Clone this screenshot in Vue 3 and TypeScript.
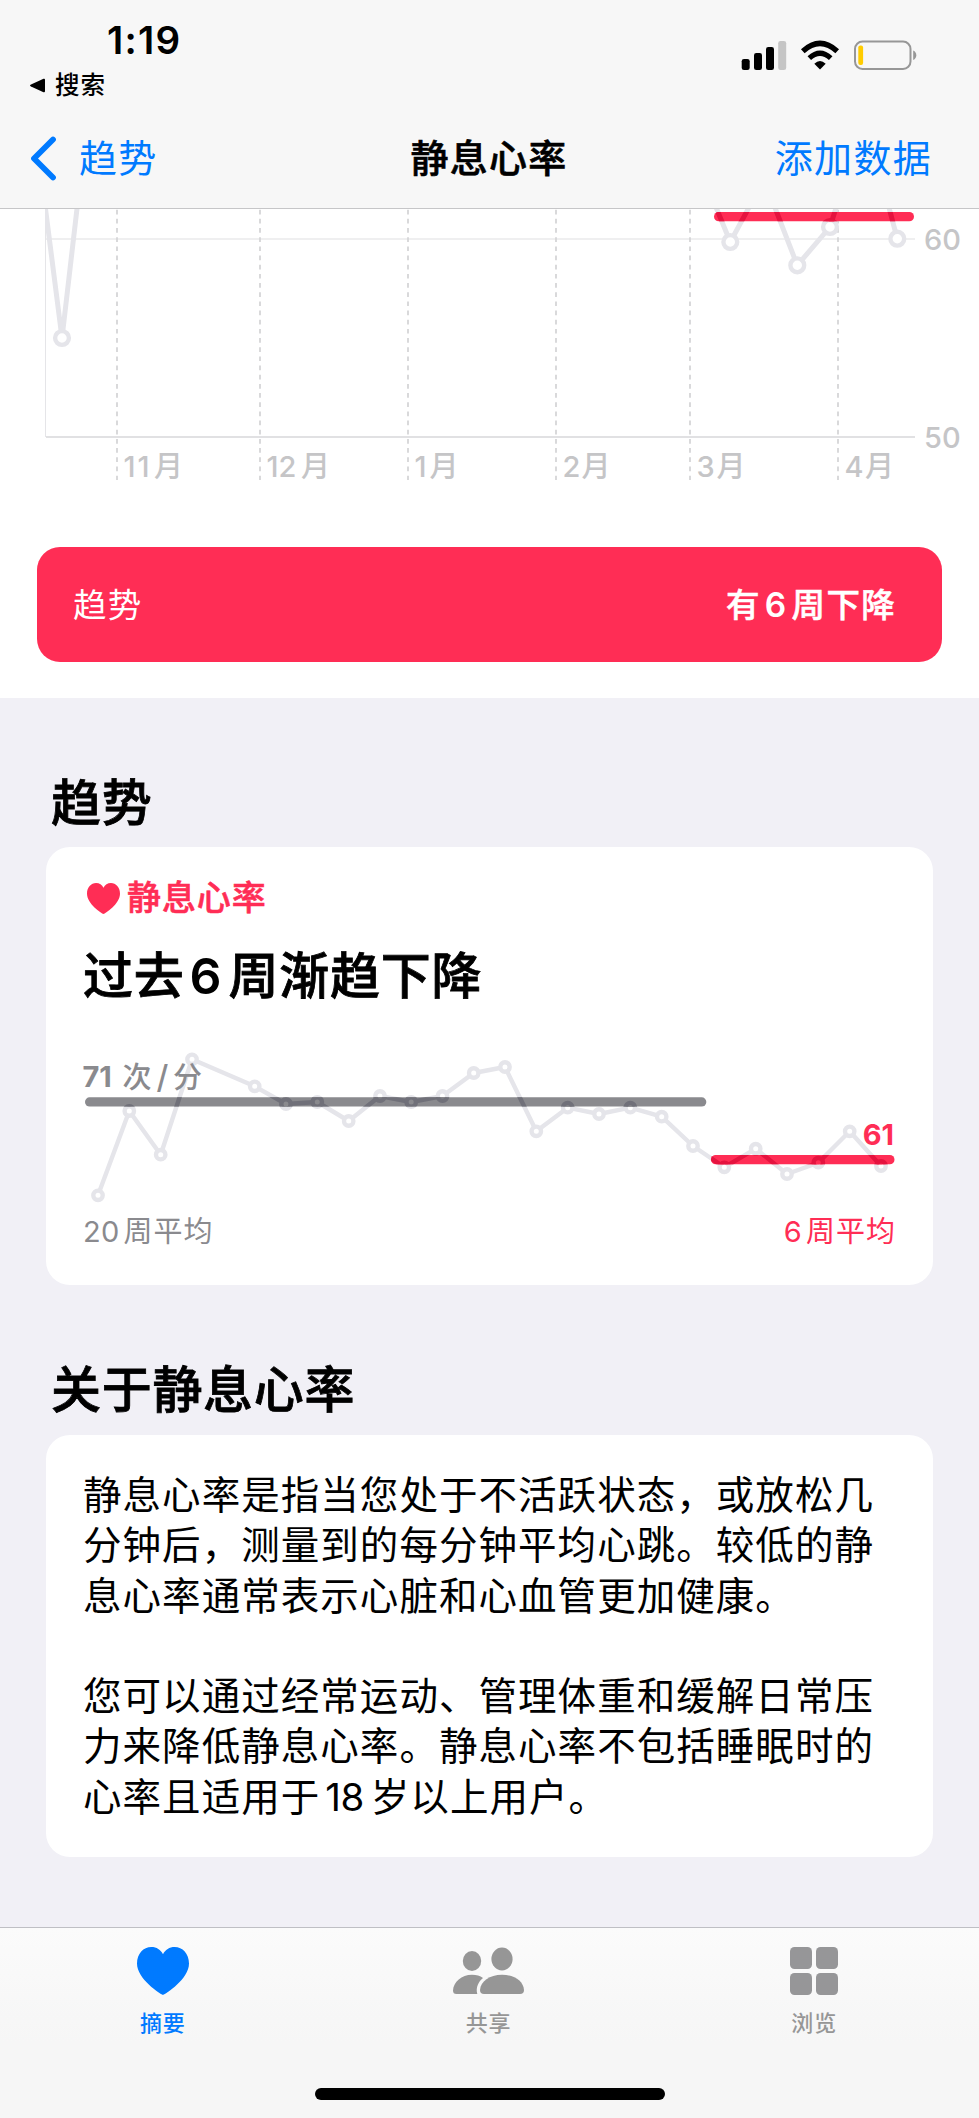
<script setup lang="ts">
interface Point { x: number; y: number }
interface Month { x: number; num: string; label: number }

const months: Month[] = [
  { x: 117, num: '11', label: 157.5 },
  { x: 260, num: '12', label: 304.5 },
  { x: 408, num: '1', label: 433 },
  { x: 556, num: '2', label: 585 },
  { x: 690, num: '3', label: 720 },
  { x: 838, num: '4', label: 868.5 },
]

const historyLine = 'M45 205L62 338L78 200M713 200L730.3 242L753 200M772 200L797.3 265.3L830 227L838.5 200M887 200L897.3 239'
const historyDots: Point[] = [
  { x: 62, y: 338 }, { x: 730.3, y: 242 }, { x: 797.3, y: 265.3 }, { x: 830, y: 227 }, { x: 897.3, y: 238.7 },
]

const trend: Point[] = [
  [98, 1195.3], [129.3, 1111], [160.7, 1154.7], [192, 1059.3], [254.7, 1086.3], [286, 1104], [317.3, 1102],
  [348.7, 1121], [380, 1096], [411.2, 1102], [442.5, 1096], [473.7, 1073], [505, 1067], [536.3, 1131.3],
  [567.7, 1107.7], [599, 1114], [630.3, 1107.7], [661.7, 1116.7], [693, 1146], [724.3, 1167.3],
  [755.7, 1148.7], [787, 1174], [818.3, 1162.7], [849.7, 1131.3], [881, 1166],
].map(([x, y]) => ({ x, y }))
const trendLine = 'M' + trend.map(p => `${p.x} ${p.y}`).join('L')

const heart = 'M26 48C23 46.800 0 32 0 16.500C0 6.500 6.500 0 14.300 0C19.600 0 23.700 2.700 26 7.200C28.300 2.700 32.400 0 37.700 0C45.500 0 52 6.500 52 16.500C52 32 29 46.800 26 48Z'

const about: string[][] = [
  ['静息心率是指当您处于不活跃状态，或放松几', '分钟后，测量到的每分钟平均心跳。较低的静', '息心率通常表示心脏和心血管更加健康。'],
  ['您可以通过经常运动、管理体重和缓解日常压', '力来降低静息心率。静息心率不包括睡眠时的'],
]
</script>

<template>
  <div class="screen">
    <header class="top">
      <div class="status">
        <div class="status-left">
          <div class="time">1:19</div>
          <div class="return">
            <svg width="17" height="17" viewBox="0 0 17 17"><path d="M2 7.500L14.500 1.800Q16 1.300 16 2.800V14.200Q16 15.700 14.500 15.200L2 9.500Q0 8.500 2 7.500Z" /></svg>
            <span>搜索</span>
          </div>
        </div>
        <svg class="status-icons" width="176" height="32" viewBox="741 39 176 32">
          <rect x="741.700" y="59" width="8" height="11" rx="2.300" />
          <rect x="754" y="53" width="8" height="17" rx="2.300" />
          <rect x="766" y="47" width="8" height="23" rx="2.300" />
          <rect x="778.200" y="41" width="8" height="29" rx="2.300" fill="#c5c5c5" />
          <g fill="none" stroke="#000">
            <path d="M802.800 51.200Q820 35.600 837.200 51.200" stroke-width="5.400" />
            <path d="M809.300 58.100Q820 48.300 830.700 58.100" stroke-width="5.200" />
          </g>
          <path d="M820 69.500L814.300 63.800Q820 58 825.700 63.800Z" />
          <rect x="855" y="41.500" width="55.500" height="27.500" rx="7.500" fill="none" stroke="#979797" stroke-width="2" />
          <path d="M913.200 50.500Q916.300 52 916.300 55.200Q916.300 58.400 913.200 60Z" fill="#979797" />
          <rect x="858.300" y="45.500" width="4.800" height="19.500" rx="2" fill="#ffcc00" />
        </svg>
      </div>
      <nav class="nav">
        <div class="back">
          <svg width="27" height="45" viewBox="0 0 27 45"><path d="M23 3.500L4 22.500L23 41.500" fill="none" stroke="#007aff" stroke-width="5.800" stroke-linecap="round" stroke-linejoin="round" /></svg>
          <span>趋势</span>
        </div>
        <div class="nav-title">静息心率</div>
        <div class="nav-action">添加数据</div>
      </nav>
    </header>

    <section class="history">
      <svg class="history-chart" width="979" height="338" viewBox="0 209 979 338">
        <defs>
          <clipPath id="plot"><rect x="45" y="209" width="870" height="229" /></clipPath>
          <clipPath id="hbar"><rect x="714" y="212" width="200" height="9.300" rx="4.650" /></clipPath>
        </defs>
        <path d="M45 239H915" stroke="#efeff0" stroke-width="2" />
        <path d="M45.500 209V437" stroke="#e5e5e8" stroke-width="1" />
        <path d="M46 437H915" stroke="#e1e1e3" stroke-width="2" />
        <path v-for="m in months" :key="m.x" :d="`M${m.x} 209.700V480`" stroke="#d5d5d7" stroke-width="1.800" stroke-dasharray="4.700 4.470" />
        <g clip-path="url(#plot)" class="series wide">
          <path :d="historyLine" />
          <circle v-for="p in historyDots" :key="p.x" :cx="p.x" :cy="p.y" r="6.900" fill="#fff" />
        </g>
        <rect x="714" y="212" width="200" height="9.300" rx="4.650" fill="#ff2d55" />
        <g clip-path="url(#hbar)" class="series wide on-red">
          <path :d="historyLine" />
          <circle v-for="p in historyDots" :key="p.x" :cx="p.x" :cy="p.y" r="6.900" fill="#ff2d55" />
        </g>
        <g class="axis">
          <g v-for="m in months" :key="m.x">
            <text :x="m.x + 6.500" y="476.500" :class="{ ones: m.num === '11' }">{{ m.num }}</text>
            <text :x="m.label - 3.500" y="477">月</text>
          </g>
          <text x="924" y="249.500">60</text>
          <text x="924" y="447.500">50</text>
        </g>
      </svg>
      <div class="banner">
        <span>趋势</span>
        <strong>有<i>6</i>周下降</strong>
      </div>
    </section>

    <main class="content">
      <h2>趋势</h2>
      <article class="card trend-card">
        <div class="metric">
          <svg width="33" height="31" viewBox="0 0 52 48" preserveAspectRatio="none"><path :d="heart" fill="#ff2d55" /></svg>
          <span>静息心率</span>
        </div>
        <h3>过去<i>6</i>周渐趋下降</h3>
        <svg class="trend-chart" width="887" height="205" viewBox="46 1005 887 205">
          <defs>
            <clipPath id="gbar"><rect x="85" y="1097.300" width="621.300" height="9.300" rx="4.650" /></clipPath>
            <clipPath id="rbar"><rect x="711" y="1155" width="183.500" height="9.300" rx="4.650" /></clipPath>
          </defs>
          <g class="series">
            <path :d="trendLine" />
            <circle v-for="p in trend" :key="p.x" :cx="p.x" :cy="p.y" r="4.700" fill="#fff" />
          </g>
          <rect x="85" y="1097.300" width="621.300" height="9.300" rx="4.650" fill="#8a8a8e" />
          <g clip-path="url(#gbar)" class="series on-gray">
            <path :d="trendLine" />
            <circle v-for="p in trend" :key="p.x" :cx="p.x" :cy="p.y" r="4.700" fill="#8a8a8e" />
          </g>
          <rect x="711" y="1155" width="183.500" height="9.300" rx="4.650" fill="#ff2d55" />
          <g clip-path="url(#rbar)" class="series on-red">
            <path :d="trendLine" />
            <circle v-for="p in trend" :key="p.x" :cx="p.x" :cy="p.y" r="4.700" fill="#ff2d55" />
          </g>
          <g class="average">
            <text x="82.500" y="1087" class="value">71</text>
            <text x="122.500" y="1088">次</text>
            <text x="156.500" y="1088" class="slash">/</text>
            <text x="173" y="1088">分</text>
            <text x="894" y="1145" class="value red" text-anchor="end">61</text>
          </g>
        </svg>
        <div class="legend">
          <span><i>20</i>周平均</span>
          <span class="red"><i>6</i>周平均</span>
        </div>
      </article>

      <h2 class="second">关于静息心率</h2>
      <article class="card about">
        <p>
          <span v-for="line in about[0]" :key="line">{{ line }}</span>
        </p>
        <p>
          <span v-for="line in about[1]" :key="line">{{ line }}</span>
          <span>心率且适用于<i>18</i>岁以上用户。</span>
        </p>
      </article>
    </main>

    <footer class="tabs">
      <div class="tab-row">
        <div class="tab active">
          <svg width="52" height="48" viewBox="0 0 52 48"><path :d="heart" fill="#007aff" /></svg>
          <span>摘要</span>
        </div>
        <div class="tab">
          <svg width="72" height="48" viewBox="452 1947 72 48" fill="#969696">
            <ellipse cx="472" cy="1961" rx="9.200" ry="10" />
            <ellipse cx="502" cy="1959" rx="10.600" ry="11.400" />
            <path d="M456.500 1994Q453 1994 453 1990.500C453.500 1982 461.500 1974.800 472 1974.800C476.500 1974.800 480 1976 483 1978C478.500 1981.500 475.500 1987.500 477.300 1994Z" />
            <path d="M484 1994Q480 1994 480 1990C480.500 1981.500 489.500 1974.800 502 1974.800C514.500 1974.800 523.500 1981.500 524 1990Q524 1994 520 1994Z" />
          </svg>
          <span>共享</span>
        </div>
        <div class="tab">
          <svg width="48" height="48" viewBox="0 0 48 48" fill="#969698">
            <rect width="22" height="22" rx="4.500" /><rect x="26" width="22" height="22" rx="4.500" />
            <rect y="26" width="22" height="22" rx="4.500" /><rect x="26" y="26" width="22" height="22" rx="4.500" />
          </svg>
          <span>浏览</span>
        </div>
      </div>
      <div class="home"></div>
    </footer>
  </div>
</template>

<style>
body { margin: 0; background: #f1f0f6; }
</style>

<style scoped>
.screen {
  width: 979px;
  height: 2118px;
  display: flex;
  flex-direction: column;
  overflow: hidden;
  background: #f1f0f6;
  color: #000;
  font-family: Inter, "Noto Sans CJK SC", sans-serif;
  white-space: nowrap;
}
i { font-style: normal; }
svg { display: block; flex: none; }
.red { color: #ff2d55; fill: #ff2d55; }

.top { height: 208px; flex: none; background: #f7f7f7; border-bottom: 1px solid #c6c6c8; }
.status { height: 108px; display: flex; justify-content: space-between; box-sizing: border-box; padding: 20px 62px 0 29px; }
.time { padding-left: 78px; font-size: 38.500px; line-height: 41px; font-weight: 600; letter-spacing: 1.200px; }
.return { display: flex; align-items: center; gap: 9px; margin-top: 9px; font-size: 24.500px; line-height: 30px; font-weight: 500; letter-spacing: 1px; }
.status-icons { margin-top: 19px; }
.nav { height: 100px; display: grid; grid-template-columns: 1fr auto 1fr; align-items: center; padding: 0 47px 0 30px; font-size: 38px; line-height: 50px; letter-spacing: 1.300px; }
.back { display: flex; align-items: center; gap: 22px; color: #007aff; }
.nav-title, .metric, h2, h3, .banner strong { font-weight: 500; -webkit-text-stroke: 0.016em currentColor; }
.nav-title { transform: translateX(8px); }
.nav-action { text-align: right; color: #007aff; }

.history { height: 489px; flex: none; background: #fff; }
.series { fill: none; stroke: #e5e5ea; stroke-width: 4.4; stroke-linejoin: round; }
.series.wide path { stroke-width: 5; }
.on-red { stroke: #e5133f; }
.on-gray { stroke: #707079; }
.axis { font-size: 29px; font-weight: 500; fill: #c5c5c7; }
.ones { letter-spacing: 2px; }
.banner { display: flex; justify-content: space-between; align-items: center; height: 114.500px; box-sizing: border-box; margin: 0 37px; padding: 1px 46px 0 36px; border-radius: 23px; background: #ff2d55; color: #fff; font-size: 33.500px; line-height: 40px; letter-spacing: 1.300px; }
.banner i { margin: 0 4px; font-weight: 600; -webkit-text-stroke: 0; }

.content { flex: 1; padding: 0 46px; }
h2 { margin: 0; padding: 75px 0 13px 5px; font-size: 50px; line-height: 61px; letter-spacing: 0.700px; }
h2.second { padding-bottom: 14px; }
.card { background: #fff; border-radius: 24px; box-sizing: border-box; }
.trend-card { height: 438px; padding-top: 31px; }
.metric { display: flex; align-items: center; gap: 7px; padding-left: 41px; font-size: 34px; line-height: 40px; letter-spacing: 0.900px; color: #ff2d55; }
h3 { margin: 28px 0 -1px 37px; font-size: 50px; line-height: 60px; letter-spacing: 0.800px; }
h3 i { margin: 0 6px 0 5px; font-weight: 600; -webkit-text-stroke: 0; }
.average { font-size: 29px; font-weight: 500; fill: #8a8a8e; }
.slash { font-size: 32px; }
.value { font-weight: 700; }
.average .red { fill: #ff2d55; }
.legend { display: flex; justify-content: space-between; padding: 1px 37px 0 37px; font-size: 29px; line-height: 42px; letter-spacing: 1px; color: #8a8a8e; }
.legend i { margin-right: 4px; letter-spacing: 0.300px; }
.legend .red { color: #ff2d55; }
.about { height: 422px; padding: 35px 0 0 37px; font-size: 38.500px; line-height: 50.350px; letter-spacing: 1.050px; }
.about p { margin: 0 0 50px; }
.about p span { display: block; }
.about i { margin: 0 7px 0 5px; letter-spacing: -0.500px; }

.tabs { height: 191px; flex: none; box-sizing: border-box; border-top: 1px solid #bfbfc4; background: linear-gradient(#fbfbfb, #f6f6f6 60%); }
.tab-row { display: grid; grid-template-columns: repeat(3, 1fr); width: 977px; padding-top: 19px; }
.tab { display: flex; flex-direction: column; align-items: center; gap: 13px; font-size: 22px; line-height: 30px; font-weight: 500; letter-spacing: 0.800px; color: #969696; }
.active { color: #007aff; }
.home { width: 350px; height: 12px; margin: 50px auto 0; border-radius: 6px; background: #000; }
</style>
